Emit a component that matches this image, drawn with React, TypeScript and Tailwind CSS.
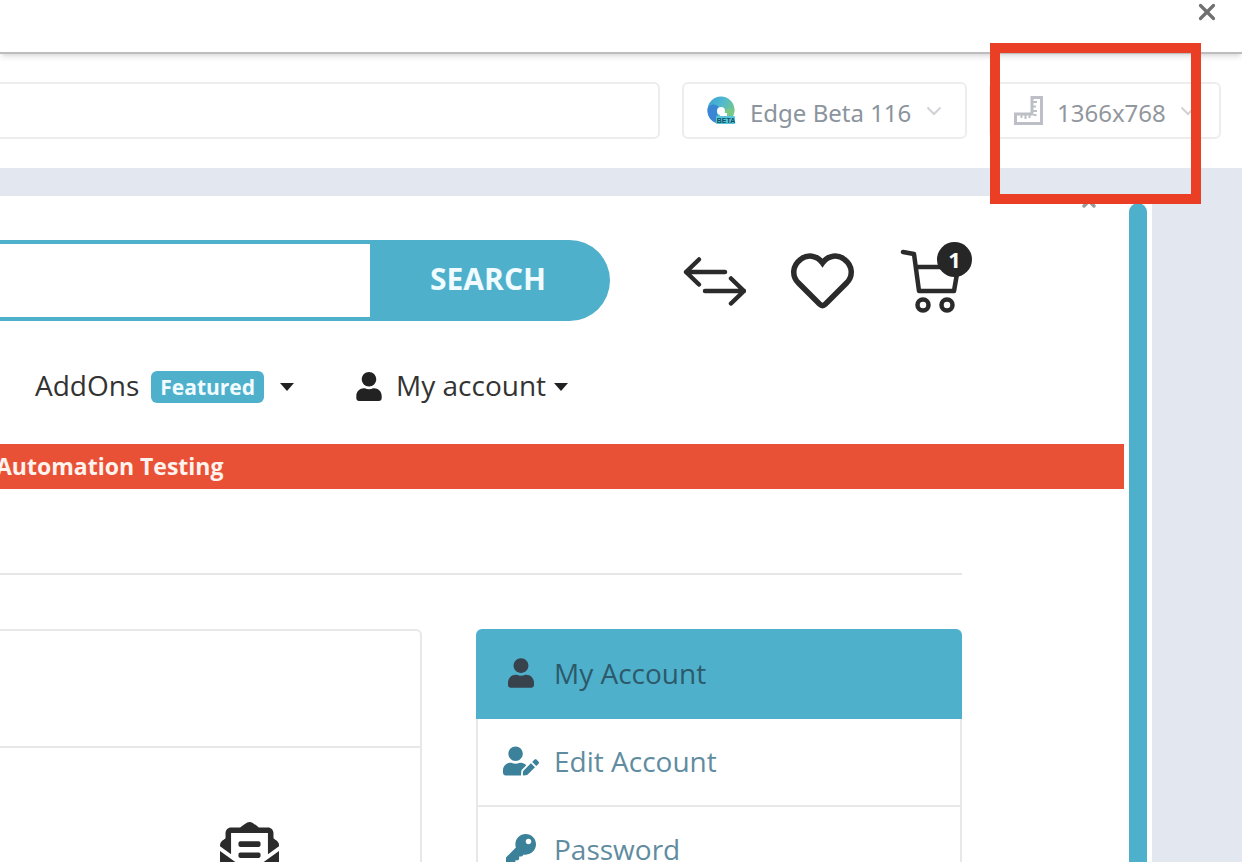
import { X } from "lucide-react";
import { FaUser, FaUserEdit, FaKey, FaEnvelopeOpenText } from "react-icons/fa";

const EdgeBetaIcon = () => (
  <svg viewBox="0 0 29 29" className="w-[29px] h-[29px] shrink-0">
    <defs>
      <linearGradient id="edgeTop" x1="0" y1="0" x2="1" y2="0.6">
        <stop offset="0" stopColor="#3a9fd8" />
        <stop offset="0.5" stopColor="#4fb9cf" />
        <stop offset="1" stopColor="#7cc885" />
      </linearGradient>
    </defs>
    <circle cx="14" cy="14" r="13.500" fill="url(#edgeTop)" />
    <path d="M0.500 13C3 7 9 8 12 11c-2 3-3 7 0 11l2 5.500C6 28 0 22 0.500 13z" fill="#3a86d4" />
    <path d="M22 12c3 3 5 2 5.500 1 0 4-3 6-7 6-3 0-4-2-3-4z" fill="#7cc885" />
    <circle cx="14" cy="15" r="4" fill="#fff" />
    <path d="M13 17h7v3h-7z" fill="#fff" />
    <rect x="9" y="20" width="19" height="8" rx="1" fill="#56c5dc" />
    <text x="19" y="27" textAnchor="middle" fontSize="7" fontWeight="700" fontFamily="Liberation Sans, sans-serif" fill="#12505e">
      BETA
    </text>
  </svg>
);

const RulerIcon = () => (
  <svg viewBox="0 0 29 29" className="w-[29px] h-[29px] shrink-0" fill="none" stroke="#bdbfc7">
    <path d="M18 1.5h9.500v26h-26V18H18z" strokeWidth="3" />
    <path d="M19 6h4M19 10.500h3M19 15h4M7.500 19v3M11.500 19v4M15.500 19v3M19.500 19h3" strokeWidth="2" />
  </svg>
);

const Chevron = () => (
  <svg viewBox="0 0 16 10" className="w-4 h-[10px] shrink-0 pointer-events-none" fill="none" stroke="#d0d2d6" strokeWidth="2">
    <path d="M1.5 1.5 8 8l6.500-6.500" />
  </svg>
);

const Caret = () => (
  <svg viewBox="0 0 14 8" className="w-[14px] h-2 shrink-0" fill="#222">
    <path d="M0 0h14L7 8z" />
  </svg>
);

const CompareIcon = () => (
  <svg viewBox="0 0 64 64" className="w-16 h-16" fill="none" stroke="#2b2b2b" strokeWidth="4.500" strokeLinecap="round" strokeLinejoin="round">
    <path d="M43 23H4M17 10.500 4 23l13 12.500" />
    <path d="M23 42h39M49 29.500 62 42 49 54.500" />
  </svg>
);

const HeartIcon = () => (
  <svg viewBox="0 0 64 64" className="w-16 h-16" fill="none" stroke="#2b2b2b" strokeWidth="5.500" strokeLinejoin="miter">
    <path d="M32.500 14C27 6 17 5 10.500 10.500 2 17 2 27 8 33.500L29.500 55Q32.500 58 35.500 55L57 33.500C63 27 63 17 54.500 10.500 48 5 38 6 32.500 14z" />
  </svg>
);

const CartIcon = () => (
  <svg viewBox="0 0 72 72" className="w-[72px] h-[72px]" fill="none" stroke="#2b2b2b" strokeWidth="4.500" strokeLinecap="round" strokeLinejoin="round">
    <path d="M5 7l11 2 5 37h35l4-23M18 22h42" />
    <circle cx="25" cy="60" r="5.500" />
    <circle cx="49" cy="60" r="5.500" />
  </svg>
);

const menu = [
  { label: "My Account", icon: <FaUser className="w-[26px] h-[30px]" />, active: true },
  { label: "Edit Account", icon: <FaUserEdit className="w-9 h-[30px]" />, active: false },
  { label: "Password", icon: <FaKey className="w-[30px] h-[30px]" />, active: false },
];

const TopBar = () => (
  <header className="relative z-10 flex h-[54px] shrink-0 items-start justify-end border-b-2 border-[#bdbdbd] bg-white pr-[22px] shadow-md">
    <button aria-label="Close" className="text-[#707070]">
      <X className="w-[26px] h-[26px] -mt-px" strokeWidth={3} />
    </button>
  </header>
);

const Toolbar = () => (
  <div className="relative flex shrink-0 gap-[22px] bg-white pt-7 pr-[21px] pb-[29px]">
    <input
      type="text"
      aria-label="Address"
      className="-ml-2 h-[57px] min-w-0 flex-1 rounded-md border-2 border-[#ededee] px-6 outline-none"
    />
    <label className="flex h-[57px] items-center gap-[14px] rounded-md border-2 border-[#ededee] px-[23px]">
      <EdgeBetaIcon />
      <select aria-label="Browser" className="appearance-none bg-transparent pt-1 font-['Noto_Sans',sans-serif] text-[24px] text-[#8b949d] outline-none">
        <option>Edge Beta 116</option>
      </select>
      <Chevron />
    </label>
    <label className="flex h-[57px] items-center gap-[14px] rounded-md border-2 border-[#ededee] px-[23px]">
      <RulerIcon />
      <select aria-label="Resolution" className="appearance-none bg-transparent pt-1 font-['Noto_Sans',sans-serif] text-[24px] text-[#92979d] outline-none">
        <option>1366x768</option>
      </select>
      <Chevron />
    </label>
    {/* Highlight around the resolution picker */}
    <div className="pointer-events-none absolute top-[-11px] right-[41px] z-20 h-[161px] w-[211px] border-[10px] border-[#ea3f25]" />
  </div>
);

const Store = () => (
  <main className="relative min-w-0 flex-1 bg-white">
    <button aria-label="Dismiss" className="absolute top-[-5px] right-[25px] text-[#999]">
      <X className="w-5 h-5" strokeWidth={4} />
    </button>

    {/* Search and shop icons */}
    <div className="flex items-center pt-11 pr-[154px]">
      <form className="flex h-[81px] min-w-0 flex-1 overflow-hidden rounded-r-full border-4 border-l-0 border-[#4fb0cc] bg-[#4fb0cc]">
        <input type="search" aria-label="Search for products" className="min-w-0 flex-1 bg-white px-4 outline-none" />
        <button type="button" className="w-[236px] pb-1 text-[30px] font-bold text-[#f0fcff]">
          SEARCH
        </button>
      </form>
      <div className="ml-[72px] flex items-center gap-11">
        <a href="#compare" aria-label="Compare">
          <CompareIcon />
        </a>
        <a href="#wishlist" aria-label="Wishlist">
          <HeartIcon />
        </a>
        <a href="#cart" aria-label="Cart" className="relative">
          <CartIcon />
          <span className="absolute top-[-3px] right-[-2px] flex h-[35px] w-[35px] items-center justify-center rounded-full bg-[#262626] text-[22px] font-bold text-white">
            1
          </span>
        </a>
      </div>
    </div>

    {/* Main menu */}
    <nav className="flex h-[123px] items-center pt-2 pl-[35px] text-[28px] leading-8 font-medium text-[#333]">
      <button className="flex items-center">
        <span className="pb-1">AddOns</span>
        <span className="ml-3 flex h-8 items-center rounded-md bg-[#4fb0cc] px-[9px] text-[21px] font-bold text-[#f0fcff]">Featured</span>
        <span className="ml-4">
          <Caret />
        </span>
      </button>
      <button className="ml-[62px] flex items-center">
        <FaUser className="mr-[14px] w-[26px] h-[29px] text-[#222]" />
        <span className="pb-1">My account</span>
        <span className="ml-2">
          <Caret />
        </span>
      </button>
    </nav>

    <div className="-ml-1 flex h-[45px] items-center bg-[#e95137] text-[23px] font-bold text-[#fff3ee]">
      Automation Testing
    </div>

    <div className="mr-[162px] pt-[84px]">
      <hr className="border-t-2 border-[#e6e6e6]" />
      <div className="mt-[54px] flex items-start gap-[54px]">
        <section className="min-w-0 flex-1 rounded-tr-md border-2 border-l-0 border-[#e8e8e8]">
          <div className="h-[117px] border-b-2 border-[#e8e8e8]" />
          <div className="pt-[74px] pb-20 pl-[220px]">
            <FaEnvelopeOpenText className="w-[59px] h-[59px] text-[#2b2b2b]" />
          </div>
        </section>
        <aside className="w-[486px] shrink-0 overflow-hidden rounded-md">
          {menu.map((item) => (
            <a
              key={item.label}
              href="#account"
              className={
                item.active
                  ? "flex h-[90px] items-center bg-[#4fb0cc] pb-[2px] pl-[26px] text-[28px] text-[#2c5a6b]"
                  : "flex h-[88px] items-center border-2 border-t-0 border-[#e8e8e8] pb-[2px] pl-6 text-[28px] text-[#5f8ca0]"
              }
            >
              <span
                className={
                  item.active
                    ? "mr-[14px] flex w-[38px] justify-center text-[#37424c]"
                    : "mr-[14px] flex w-[38px] justify-center text-[#3a8199]"
                }
              >
                {item.icon}
              </span>
              {item.label}
            </a>
          ))}
        </aside>
      </div>
    </div>
  </main>
);

export default function App() {
  return (
    <div className="flex h-screen w-full flex-col overflow-hidden bg-[#e3e7ef] font-['Open_Sans',sans-serif]">
      <TopBar />
      <Toolbar />
      <div className="mt-7 mr-[90px] flex min-h-0 flex-1 overflow-hidden bg-white">
        <Store />
        <div className="w-7 shrink-0 bg-white pt-[7px] pl-[5px]">
          <div className="h-full w-[18px] rounded-t-full bg-[#4fb0cc]" />
        </div>
      </div>
    </div>
  );
}
